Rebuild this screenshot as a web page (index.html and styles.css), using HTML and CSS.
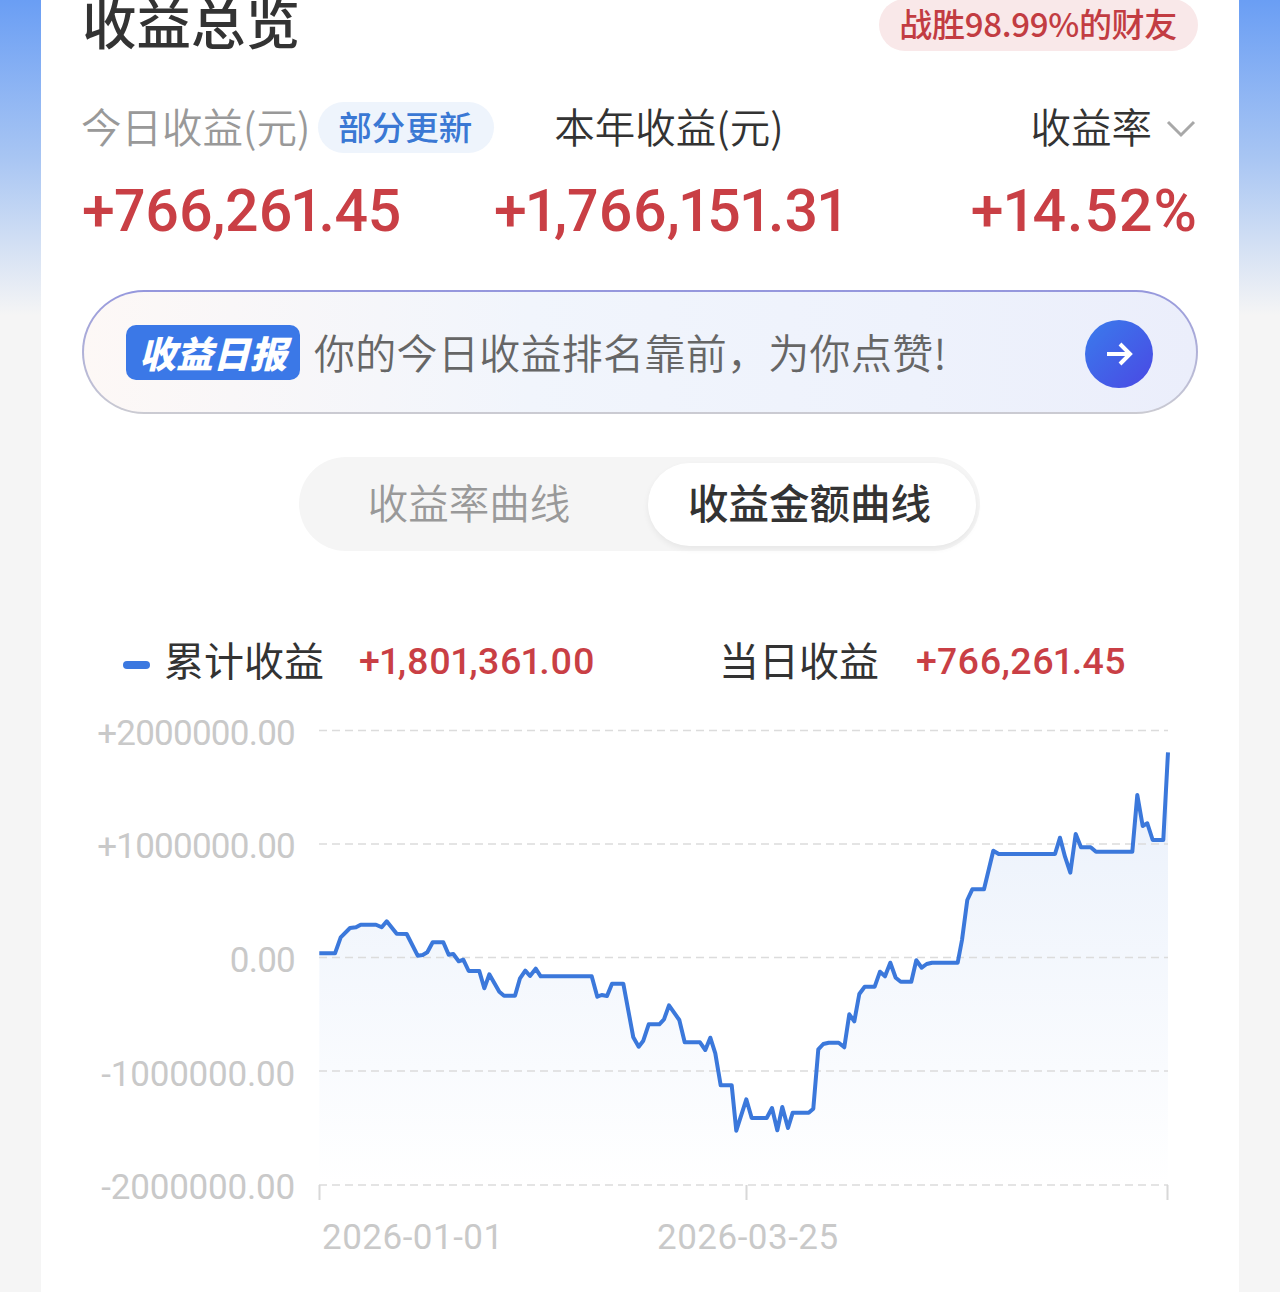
FILE: index.html
```html
<!DOCTYPE html>
<html lang="zh-CN">
<head>
  <meta charset="UTF-8">
  <title>收益总览</title>
  <link rel="stylesheet" href="styles.css">
</head>
<body>
  <div class="card">
    <div class="head">
      <h1 class="title">收益总览</h1>
      <span class="beat">战胜98.99%的财友</span>
    </div>

    <div class="stats">
      <div class="label today"><span class="label-text">今日收益(元)</span><span class="badge">部分更新</span></div>
      <div class="label year"><span class="label-text">本年收益(元)</span></div>
      <div class="label rate"><span class="label-text">收益率</span>
        <svg class="chevron" width="30" height="18" viewBox="0 0 30 18"><path d="M2 2 L15 15 L28 2"/></svg>
      </div>
      <div class="num">+766,261.45</div>
      <div class="num year">+1,766,151.31</div>
      <div class="num rate">+14.52%</div>
    </div>

    <div class="banner">
      <span class="tag">收益日报</span>
      <span class="banner-text">你的今日收益排名靠前，为你点赞!</span>
      <span class="go">
        <svg width="32" height="32" viewBox="0 0 32 32"><path d="M4 16 H27 M17 6 L27 16 L17 26"/></svg>
      </span>
    </div>

    <div class="toggle">
      <span class="toggle-item">收益率曲线</span>
      <span class="toggle-item active">收益金额曲线</span>
    </div>

    <div class="legend">
      <span class="dash"></span>
      <span class="legend-name">累计收益</span>
      <span class="legend-val total">+1,801,361.00</span>
      <span class="legend-name daily">当日收益</span>
      <span class="legend-val">+766,261.45</span>
    </div>

    <!-- viewBox uses page coordinates so the points read off the chart stay as they are -->
    <svg class="chart" width="1116" height="550" viewBox="82 710 1116 550">
      <defs>
        <linearGradient id="area" gradientUnits="userSpaceOnUse" x1="0" y1="750" x2="0" y2="1185">
          <stop offset="0" stop-color="#e9f0fb"/>
          <stop offset="1" stop-color="#ffffff"/>
        </linearGradient>
      </defs>

      <path class="area" d="M319.3 953.3 L335 953.3 340.7 937.3 350 928 356 927.3 360.7 924.7 376 924.7 381.7 927.3 386.7 921.3 396.7 933.7 406.7 934 417.7 955.7 422.7 955 427.3 952.3 432.7 942.3 443.3 942.3 448.7 954.7 453.3 954 458.7 961.3 463.3 959.7 468.7 971 479.3 971 484.3 988.3 489.3 974.3 499.3 991.7 504 995.7 515 995.7 520 978.3 525.3 970.7 530 976 535.7 968.7 540.7 976.3 591.7 976.3 597.3 996.7 601.7 995 607 996 612 983.7 623.3 983.7 633.3 1037.3 638.7 1046.7 643.3 1040.7 648.7 1024.3 659.3 1024.3 664 1019.3 669 1005.3 679.3 1020 684.7 1042.3 700 1042.3 705.3 1050 710.3 1037.7 715.3 1053.3 720.7 1085.3 731.7 1085.3 736.3 1130.7 746.3 1099.3 751.7 1118 766.7 1118 772 1108 777.3 1130.3 782.3 1107 788 1128 792.7 1112.7 808.7 1112.7 813.3 1108.7 818.3 1049.3 823.3 1044 828.7 1042.7 838.7 1042.7 844.3 1047.3 849.3 1014.3 854.3 1021.3 859.3 994 864.7 986.7 874.7 986.7 880 971.7 885 976.3 890.3 962.7 895.7 977.7 900.7 981.7 911.3 981.7 916.3 960.3 921.7 967.7 926.7 964 932 962.7 957.7 962.7 962 940 967.3 900 972.3 889.3 984 889.3 993.3 850.7 998.7 854 1055 854 1060 837.7 1065 856.7 1070.3 872.7 1075.7 834 1081 847.3 1090.7 847.3 1096 851.7 1132.3 851.7 1137.3 795 1142.7 826 1147.3 823.3 1152.7 840 1163.3 840 1168 752.3 L1168 1185 L319.3 1185 Z"/>

      <path class="grid" d="M319 730.5 H1168 M319 844 H1168 M319 957.5 H1168 M319 1071 H1168 M319 1185 H1168"/>
      <path class="axis" d="M319.5 1185 V1200 M746.5 1185 V1200 M1167.5 1185 V1200"/>

      <path class="line" d="M319.3 953.3 L335 953.3 340.7 937.3 350 928 356 927.3 360.7 924.7 376 924.7 381.7 927.3 386.7 921.3 396.7 933.7 406.7 934 417.7 955.7 422.7 955 427.3 952.3 432.7 942.3 443.3 942.3 448.7 954.7 453.3 954 458.7 961.3 463.3 959.7 468.7 971 479.3 971 484.3 988.3 489.3 974.3 499.3 991.7 504 995.7 515 995.7 520 978.3 525.3 970.7 530 976 535.7 968.7 540.7 976.3 591.7 976.3 597.3 996.7 601.7 995 607 996 612 983.7 623.3 983.7 633.3 1037.3 638.7 1046.7 643.3 1040.7 648.7 1024.3 659.3 1024.3 664 1019.3 669 1005.3 679.3 1020 684.7 1042.3 700 1042.3 705.3 1050 710.3 1037.7 715.3 1053.3 720.7 1085.3 731.7 1085.3 736.3 1130.7 746.3 1099.3 751.7 1118 766.7 1118 772 1108 777.3 1130.3 782.3 1107 788 1128 792.7 1112.7 808.7 1112.7 813.3 1108.7 818.3 1049.3 823.3 1044 828.7 1042.7 838.7 1042.7 844.3 1047.3 849.3 1014.3 854.3 1021.3 859.3 994 864.7 986.7 874.7 986.7 880 971.7 885 976.3 890.3 962.7 895.7 977.7 900.7 981.7 911.3 981.7 916.3 960.3 921.7 967.7 926.7 964 932 962.7 957.7 962.7 962 940 967.3 900 972.3 889.3 984 889.3 993.3 850.7 998.7 854 1055 854 1060 837.7 1065 856.7 1070.3 872.7 1075.7 834 1081 847.3 1090.7 847.3 1096 851.7 1132.3 851.7 1137.3 795 1142.7 826 1147.3 823.3 1152.7 840 1163.3 840 1168 752.3"/>

      <text class="y-label" x="295" y="745">+2000000.00</text>
      <text class="y-label" x="295" y="858">+1000000.00</text>
      <text class="y-label" x="295" y="972">0.00</text>
      <text class="y-label neg" x="295" y="1086">-1000000.00</text>
      <text class="y-label neg" x="295" y="1199">-2000000.00</text>

      <text class="x-label" x="322" y="1249">2026-01-01</text>
      <text class="x-label" x="657" y="1249">2026-03-25</text>
    </svg>
  </div>
</body>
</html>
```

FILE: styles.css
```css
html, body {
  height: 1292px;
  overflow: hidden;
}
body {
  margin: 0;
  font-family: "Noto Sans CJK SC", "Noto Sans", sans-serif;
  background: linear-gradient(#6a9ef4 0, #a9c6f3 160px, #f5f5f5 315px);
}
.card {
  height: 1292px;
  margin: 0 41px;
  padding: 0 41px;
  background: #fff;
}
.card::before {
  content: "";
  display: table;
}

/* title row, cut off by the top of the screen */
.head {
  display: flex;
  justify-content: space-between;
  align-items: flex-start;
  height: 62px;
  margin-top: -10px;
}
.title {
  margin: 0;
  font-size: 54.5px;
  line-height: 62px;
  font-weight: 500;
  color: #333;
}
.beat {
  margin-top: 9px;
  height: 52px;
  padding: 0 21px 0 20px;
  border-radius: 26px;
  background: #f9e8e9;
  color: #c23c42;
  font-size: 33px;
  line-height: 48px;
  font-weight: 500;
  letter-spacing: -0.3px;
  white-space: nowrap;
}

.stats {
  display: grid;
  grid-template-columns: 412px 351px 1fr;
  margin-top: 50px;
}
.label {
  display: flex;
  align-items: center;
  height: 51px;
  font-size: 40.5px;
  color: #999;
  font-weight: 350;
  white-space: nowrap;
}
.label-text {
  margin-left: -1px;
  padding-bottom: 4px;
}
.label.year {
  justify-content: center;
  color: #333;
}
.label.rate {
  justify-content: flex-end;
  color: #333;
}
.badge {
  height: 51px;
  margin-left: 8px;
  padding: 0 22px 0 20px;
  border-radius: 26px;
  background: #eef4fc;
  color: #3a78d4;
  font-size: 33.5px;
  line-height: 48px;
  font-weight: 500;
}
.chevron {
  margin: 2px 2px 0 14px;
}
.chevron path {
  fill: none;
  stroke: #a8a8a8;
  stroke-width: 3;
}
.num {
  margin-top: 26px;
  font-family: Roboto, "Liberation Sans", sans-serif;
  font-size: 59px;
  line-height: 64px;
  font-weight: 500;
  font-variant-numeric: proportional-nums;
  letter-spacing: -0.4px;
  color: #c93f45;
  white-space: nowrap;
}
.num.year {
  text-align: center;
  letter-spacing: 0.1px;
}
.num.rate {
  text-align: right;
  letter-spacing: 1px;
}

.banner {
  display: flex;
  align-items: center;
  height: 124px;
  box-sizing: border-box;
  margin-top: 47px;
  padding: 0 42px;
  border: 2.5px solid transparent;
  border-radius: 62px;
  background:
    linear-gradient(90deg, #fdf8f6, #f1f5fc 40%, #eef2fc 75%, #ebeefb) padding-box,
    linear-gradient(#9597dd, #cbcbd2) border-box;
}
.tag {
  width: 174px;
  height: 55px;
  border-radius: 10px;
  background: #3b78e7;
  color: #fff;
  font-size: 37px;
  line-height: 55px;
  font-weight: 900;
  font-style: italic;
  text-align: center;
}
.banner-text {
  flex: 1;
  margin-left: 14px;
  padding-bottom: 2px;
  font-size: 41px;
  font-weight: 350;
  letter-spacing: 0.3px;
  color: #666;
  white-space: nowrap;
}
.go {
  display: flex;
  align-items: center;
  justify-content: center;
  width: 68px;
  height: 68px;
  margin: 3px 1px 0 0;
  border-radius: 50%;
  background: linear-gradient(135deg, #3a7cec, #4a48e4);
}
.go path {
  fill: none;
  stroke: #fff;
  stroke-width: 4;
}

.toggle {
  display: flex;
  align-items: center;
  width: 681px;
  height: 94px;
  margin: 43px 0 0 217px;
  border-radius: 47px;
  background: #f5f5f5;
}
.toggle-item {
  width: 340px;
  margin-right: 9px;
  padding-bottom: 5px;
  text-align: center;
  font-size: 40.5px;
  font-weight: 350;
  color: #999;
}
.toggle-item.active {
  box-sizing: border-box;
  width: 328px;
  height: 83px;
  margin-right: 0;
  padding: 0 5px 0 0;
  border-radius: 42px;
  background: #fff;
  box-shadow: 0 3px 6px rgba(0, 0, 0, 0.06);
  line-height: 78px;
  font-weight: 500;
  color: #333;
}

.legend {
  display: flex;
  align-items: center;
  height: 60px;
  margin-top: 80px;
  padding-left: 41px;
  white-space: nowrap;
}
.dash {
  width: 27px;
  height: 8px;
  margin-right: 14px;
  margin-top: 8px;
  border-radius: 4px;
  background: #3b78e0;
}
.legend-name {
  padding-bottom: 4px;
  font-size: 40px;
  color: #333;
}
.legend-name.daily {
  margin: 0 2px 0 124px;
}
.legend-val {
  margin-left: 35px;
  font-family: Roboto, "Liberation Sans", sans-serif;
  font-size: 37.5px;
  font-weight: 500;
  font-variant-numeric: proportional-nums;
  letter-spacing: 0.4px;
  color: #c93f45;
}

.chart {
  display: block;
  margin-top: 19px;
}
.area {
  fill: url(#area);
}
.grid {
  fill: none;
  stroke: #dcdcdc;
  stroke-width: 1.5;
  stroke-dasharray: 8 5;
}
.axis {
  fill: none;
  stroke: #d8d8d8;
  stroke-width: 2;
}
.line {
  fill: none;
  stroke: #3b78db;
  stroke-width: 4;
  stroke-linejoin: round;
}
.y-label, .x-label {
  font-family: Roboto, "Liberation Sans", sans-serif;
  font-size: 35px;
  fill: #c9c9c9;
}
.y-label {
  text-anchor: end;
  letter-spacing: -0.75px;
}
.y-label.neg {
  letter-spacing: -0.2px;
}
.x-label {
  letter-spacing: 0.5px;
}
```
